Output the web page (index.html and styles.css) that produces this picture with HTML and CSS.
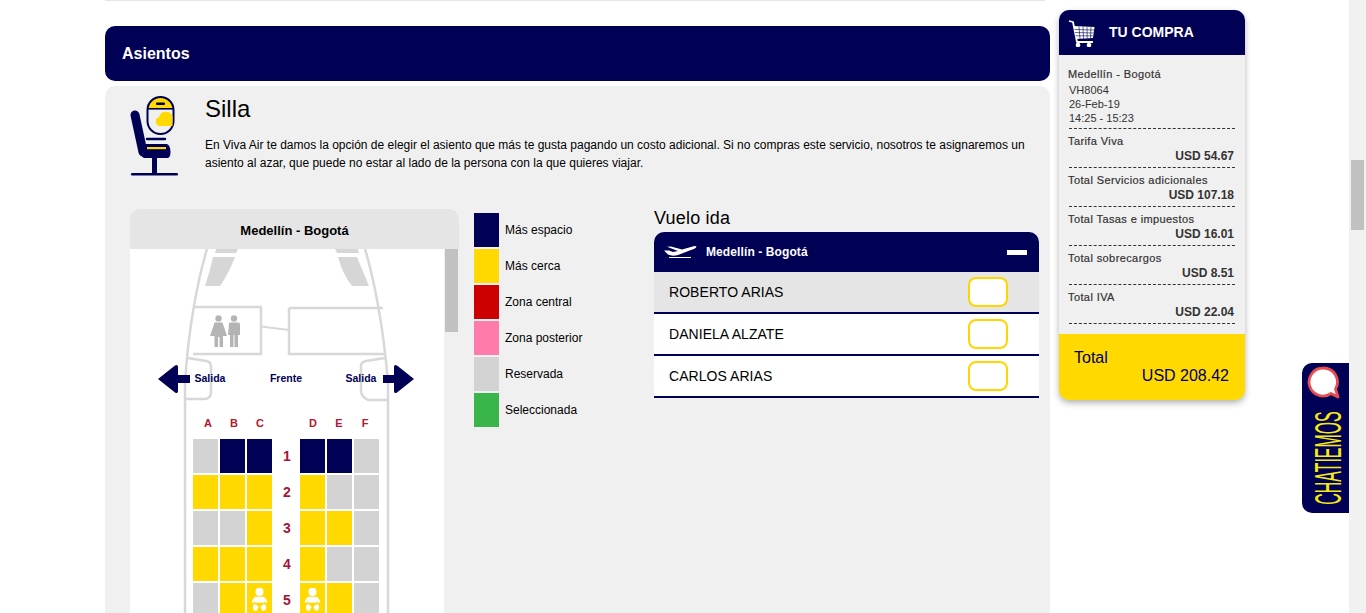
FILE: index.html
```html
<!DOCTYPE html>
<html lang="es">
<head>
    <meta charset="utf-8">
    <title>Asientos</title>
    <link rel="stylesheet" href="styles.css">
</head>
<body>

<div class="page">

    <div class="main">
        <div class="top_line"></div>
        <h2 class="banner">Asientos</h2>

        <div class="panel">
            <div class="intro">
                <svg class="seat_icon" width="48" height="80" viewBox="0 0 48 80">
                    <path d="M18 13V14A12.5 12.5 0 0 1 43 14V13Z" fill="#ffd900"/>
                    <rect x="17.5" y="1" width="26" height="37" rx="13" fill="none" stroke="#000055" stroke-width="2"/>
                    <rect x="18" y="12" width="25" height="1.6" fill="#000055"/>
                    <rect x="26" y="6.5" width="9" height="2.5" rx="1" fill="#000055"/>
                    <path d="M30 30A4.500 4.500 0 0 1 29 21.200A7 7 0 0 1 42.500 20.500V30Z" fill="#ffd900"/>
                    <path d="M5 19L13 56" stroke="#000055" stroke-width="9" stroke-linecap="round"/>
                    <path d="M17 43H35" stroke="#000055" stroke-width="2.4" stroke-linecap="round"/>
                    <path d="M14 48H37Q40.500 50 40.500 56Q40.500 62 37 62H14Q10 60 9 54Z" fill="#000055"/>
                    <rect x="17" y="51" width="19" height="2.200" fill="#ffd900"/>
                    <rect x="22" y="61" width="5" height="17" fill="#000055"/>
                    <rect x="1" y="77" width="47" height="2.4" rx="1.2" fill="#000055"/>
                </svg>
                <div class="intro_text">
                    <h1>Silla</h1>
                    <p>En Viva Air te damos la opción de elegir el asiento que más te gusta pagando un costo adicional. Si no compras este servicio, nosotros te asignaremos un asiento al azar, que puede no estar al lado de la persona con la que quieres viajar.</p>
                </div>
            </div>

            <div class="columns">
                <div class="map_card">
                    <div class="map_title">Medellín - Bogotá</div>
                    <div class="map_body">
                        <div class="map_canvas">
                            <svg class="plane" width="314" height="364" viewBox="0 0 314 364">
                                <g fill="none" stroke="#d8d8d8" stroke-width="2.5">
                                    <path d="M77 0C68 30 58 80 55 135V364"/>
                                    <path d="M235 0C244 30 254 80 258 135V364"/>
                                    <path d="M63 58H131V105H63"/>
                                    <path d="M159 59H253M159 59V105H254"/>
                                    <path d="M131 77.5L159 81" stroke-width="2"/>
                                    <path d="M58 109L76 112Q81 113 81 117V143Q81 150 74 150H56"/>
                                    <path d="M255 109L236 112Q231 113 231 117V143Q232 148 238 151L257 151"/>
                                </g>
                                <g fill="#d6d6d6">
                                    <path d="M86 0H108L106 4H85Z"/>
                                    <path d="M83 8H105Q98 26 90 37H75Q80 22 83 8Z"/>
                                    <path d="M205 0H228L229 4H207Z"/>
                                    <path d="M208 8H227L239 37H222Q213 26 208 8Z"/>
                                </g>
                                <g fill="#b4b4b4">
                                    <circle cx="88.5" cy="69.5" r="3.2"/>
                                    <path d="M84.500 73.500H92.500L97 87H93V98H89.500V88H88V98H84.500V87H80Z"/>
                                    <circle cx="104" cy="69.5" r="3.2"/>
                                    <path d="M99 74.500Q99 73.500 100 73.500H108Q110 73.500 110 75V86H108V98H104.500V86H103.500V98H100V86H98Z"/>
                                </g>
                                <g fill="#000055">
                                    <path d="M28 130L45 116.500Q48 115 48 118V126H60V134H48V142Q48 145 45 143.500Z"/>
                                    <path d="M284 130L267 116.500Q264 115 264 118V126H253V134H264V142Q264 145 267 143.500Z"/>
                                </g>
                                <g class="plane_labels">
                                    <text x="80" y="133">Salida</text>
                                    <text x="156" y="133">Frente</text>
                                    <text x="231" y="133">Salida</text>
                                </g>
                            </svg>
                            <div class="letters">
                                <span>A</span><span>B</span><span>C</span><span></span><span>D</span><span>E</span><span>F</span>
                            </div>
                            <div class="seats">
                                <i class="seat grey"></i><i class="seat navy"></i><i class="seat navy"></i><span class="row_num">1</span><i class="seat navy"></i><i class="seat navy"></i><i class="seat grey"></i>
                                <i class="seat yellow"></i><i class="seat yellow"></i><i class="seat yellow"></i><span class="row_num">2</span><i class="seat yellow"></i><i class="seat grey"></i><i class="seat grey"></i>
                                <i class="seat grey"></i><i class="seat grey"></i><i class="seat yellow"></i><span class="row_num">3</span><i class="seat yellow"></i><i class="seat yellow"></i><i class="seat grey"></i>
                                <i class="seat yellow"></i><i class="seat yellow"></i><i class="seat yellow"></i><span class="row_num">4</span><i class="seat yellow"></i><i class="seat grey"></i><i class="seat grey"></i>

                                <i class="seat grey"></i><i class="seat yellow"></i>
                                <i class="seat yellow"><svg class="baby" width="17" height="25" viewBox="0 0 19 27"><use href="#baby"/></svg></i>
                                <span class="row_num">5</span>
                                <i class="seat yellow"><svg class="baby" width="17" height="25" viewBox="0 0 19 27"><use href="#baby"/></svg></i>
                                <i class="seat yellow"></i><i class="seat grey"></i>
                            </div>
                        </div>
                        <div class="map_scroll"><div class="map_thumb"></div></div>
                    </div>
                </div>

                <ul class="legend">
                    <li><i class="swatch navy"></i>Más espacio</li>
                    <li><i class="swatch yellow"></i>Más cerca</li>
                    <li><i class="swatch red"></i>Zona central</li>
                    <li><i class="swatch pink"></i>Zona posterior</li>
                    <li><i class="swatch grey"></i>Reservada</li>
                    <li><i class="swatch green"></i>Seleccionada</li>
                </ul>

                <div class="flight">
                    <h3>Vuelo ida</h3>
                    <div class="flight_head">
                        <svg width="33" height="14" viewBox="0 0 33 14">
                            <path d="M0 5.500L5 5.500L9 7L14 6L3 1.800L7 1.500L18 4.500L27 2Q32 0.500 32.500 1.500Q32 3.500 27 5L14 10Q8 11.500 4 9.500Z" fill="#fff"/>
                            <path d="M5 12.500H27" stroke="#fff" stroke-width="1"/>
                        </svg>
                        <span class="flight_name">Medellín - Bogotá</span>
                        <i class="minus"></i>
                    </div>
                    <div class="passenger active"><span>ROBERTO ARIAS</span><i class="seat_box"></i></div>
                    <div class="passenger"><span>DANIELA ALZATE</span><i class="seat_box"></i></div>
                    <div class="passenger"><span>CARLOS ARIAS</span><i class="seat_box"></i></div>
                </div>
            </div>
        </div>
    </div>

    <div class="cart">
        <div class="cart_head">
            <svg width="28" height="28" viewBox="0 0 28 28">
                <path d="M1 2L5 3L9 23H25" fill="none" stroke="#fff" stroke-width="1.800" stroke-linejoin="round"/>
                <path d="M5.500 7L26.500 8L25 19L8.500 20Z" fill="#fff"/>
                <path d="M6.500 10.500L26 11M7 13.500L25.600 14M7.500 16.800L25.300 16.800M11 7.500L12 20M15 7.500L15.500 20M19 8L19.200 19.500M23 8L22.500 19" stroke="#000055" stroke-width="0.600"/>
                <circle cx="10" cy="26" r="2.300" fill="#fff"/>
                <circle cx="21" cy="26" r="2.300" fill="#fff"/>
            </svg>
            <span>TU COMPRA</span>
        </div>
        <div class="cart_body">
            <div class="cart_block trip">
                <div class="cart_label">Medellín - Bogotá</div>
                <div>VH8064</div>
                <div>26-Feb-19</div>
                <div>14:25 - 15:23</div>
            </div>
            <div class="cart_block">
                <div class="cart_label">Tarifa Viva</div>
                <div class="cart_price">USD 54.67</div>
            </div>
            <div class="cart_block">
                <div class="cart_label">Total Servicios adicionales</div>
                <div class="cart_price">USD 107.18</div>
            </div>
            <div class="cart_block">
                <div class="cart_label">Total Tasas e impuestos</div>
                <div class="cart_price">USD 16.01</div>
            </div>
            <div class="cart_block">
                <div class="cart_label">Total sobrecargos</div>
                <div class="cart_price">USD 8.51</div>
            </div>
            <div class="cart_block">
                <div class="cart_label">Total IVA</div>
                <div class="cart_price">USD 22.04</div>
            </div>
        </div>
        <div class="cart_total">
            <div>Total</div>
            <div class="cart_total_value">USD 208.42</div>
        </div>
    </div>

</div>

<div class="chat">
    <svg class="chat_bubble" width="34" height="34" viewBox="0 0 34 34">
        <path d="M16 2A14 14 0 1 0 24 27.500L31 31L28.500 23A14 14 0 0 0 16 2Z" fill="#fff" stroke="#ea4c50" stroke-width="2.800" stroke-linejoin="round"/>
    </svg>
    <span class="chat_text">CHATIEMOS</span>
</div>

<div class="page_scroll"><div class="page_thumb"></div></div>

<svg width="0" height="0" class="defs">
    <symbol id="baby" viewBox="0 0 19 27">
        <circle cx="9.500" cy="5" r="4.500" fill="#fff"/>
        <path d="M5 10.500H14Q16 11 18.500 16.500L16 17.500L14.500 15V17H4.500V15L3 17.500L0.500 16.500Q3 11 5 10.500Z" fill="#fff"/>
        <path d="M3.500 18.500Q7 19 8.500 22L6 26.500Q2 26 2 21.500Z" fill="#fff"/>
        <path d="M15.500 18.500Q12 19 10.500 22L13 26.500Q17 26 17 21.500Z" fill="#fff"/>
    </symbol>
</svg>

</body>
</html>
```

FILE: styles.css
```css
* {
    box-sizing: border-box;
}

html, body {
    margin: 0;
    height: 613px;
    overflow: hidden;
    background: #ffffff;
    font-family: "Liberation Sans", Arial, sans-serif;
    color: #000000;
}

.page {
    display: flex;
    align-items: flex-start;
    gap: 9px;
    padding-left: 105px;
}

/* left column */

.main {
    width: 945px;
}

.top_line {
    height: 1px;
    margin-right: 5px;
    background: #e6e6e6;
}

.banner {
    margin: 25px 0 5px 0;
    height: 55px;
    padding-left: 17px;
    border-radius: 10px;
    background: #000055;
    color: #ffffff;
    font-size: 16px;
    font-weight: bold;
    line-height: 55px;
}

.panel {
    height: 540px;
    padding: 10px 11px 0 25px;
    border-radius: 10px;
    background: #f0f0f0;
}

.intro {
    display: flex;
    height: 113px;
}

.seat_icon {
    flex: none;
    margin-right: 27px;
}

.intro_text {
    padding-top: 1px;
}

.intro_text h1 {
    margin: 0;
    font-size: 24px;
    font-weight: normal;
    line-height: 24px;
}

.intro_text p {
    margin: 15px 0 0 0;
    font-size: 12px;
    line-height: 18px;
}

.columns {
    display: flex;
    align-items: flex-start;
}

/* seat map */

.map_card {
    flex: none;
    width: 329px;
}

.map_title {
    height: 40px;
    border-radius: 10px 10px 0 0;
    background: #e5e5e5;
    font-size: 13px;
    font-weight: bold;
    line-height: 43px;
    text-align: center;
}

.map_body {
    display: flex;
    height: 364px;
}

.map_canvas {
    position: relative;
    width: 314px;
    overflow: hidden;
    background: #ffffff;
    padding-top: 154px;
}

.plane {
    position: absolute;
    left: 0;
    top: 0;
}

.plane_labels {
    fill: #000055;
    font-size: 10.5px;
    font-weight: bold;
    text-anchor: middle;
}

.letters {
    position: relative;
    display: grid;
    grid-template-columns: 26px 26px 26px 27px 26px 26px 26px;
    height: 36px;
    padding-left: 65px;
    color: #b5182f;
    font-size: 11px;
    font-weight: bold;
    line-height: 41px;
    text-align: center;
}

.seats {
    position: relative;
    display: grid;
    grid-template-columns: 25px 25px 25px 24px 25px 25px 25px;
    grid-auto-rows: 34px;
    gap: 2px;
    padding-left: 63px;
}

.seat {
    display: block;
    height: 34px;
}

.row_num {
    padding-left: 2px;
    color: #a5153a;
    font-size: 14px;
    font-weight: bold;
    line-height: 34px;
    text-align: center;
}

.baby {
    display: block;
    margin: 4px auto 0 auto;
}

.navy {
    background: #000055;
}

.yellow {
    background: #ffd900;
}

.grey {
    background: #d3d3d3;
}

.red {
    background: #cc0000;
}

.pink {
    background: #ff7bac;
}

.green {
    background: #39b54a;
}

.map_scroll {
    width: 15px;
    padding-left: 1px;
}

.map_thumb {
    width: 13px;
    height: 83px;
    background: #c1c1c1;
}

.defs {
    position: absolute;
}

/* legend */

.legend {
    flex: none;
    width: 180px;
    margin: 4px 0 0 15px;
    padding: 0;
    list-style: none;
    font-size: 12px;
}

.legend li {
    display: flex;
    align-items: center;
    gap: 6px;
    height: 34px;
    margin-bottom: 2px;
}

.swatch {
    width: 25px;
    height: 34px;
}

/* passengers */

.flight {
    flex: none;
    width: 385px;
}

.flight h3 {
    margin: 0;
    padding-bottom: 4px;
    font-size: 18px;
    font-weight: normal;
    letter-spacing: 0.2px;
    line-height: 19px;
}

.flight_head {
    display: flex;
    align-items: center;
    height: 40px;
    padding: 0 12px 0 10px;
    border-radius: 10px 10px 0 0;
    background: #000055;
    color: #ffffff;
    font-size: 12px;
    font-weight: bold;
    letter-spacing: 0.1px;
}

.flight_name {
    flex: 1;
    margin-left: 9px;
}

.minus {
    width: 20px;
    height: 5px;
    background: #ffffff;
}

.passenger {
    display: flex;
    align-items: center;
    justify-content: space-between;
    height: 42px;
    padding: 0 31px 0 15px;
    border-bottom: 2px solid #000055;
    background: #ffffff;
    font-size: 14px;
    letter-spacing: 0.05px;
}

.passenger.active {
    background: #e5e5e5;
}

.seat_box {
    width: 40px;
    height: 30px;
    border: 2px solid #ffd500;
    border-radius: 8px;
    background: #ffffff;
}

/* cart */

.cart {
    width: 186px;
    margin-top: 10px;
    border-radius: 10px;
    background: #f0f0f0;
    box-shadow: 0 3px 6px rgba(0, 0, 0, 0.3);
}

.cart_head {
    display: flex;
    align-items: center;
    gap: 13px;
    height: 45px;
    padding: 0 0 0 9px;
    border-radius: 10px 10px 0 0;
    background: #000055;
    color: #ffffff;
    font-size: 14px;
    font-weight: bold;
}

.cart_head span {
    margin-bottom: 2px;
}

.cart_body {
    height: 279px;
    padding: 12px 10px 0 10px;
}

.cart_block {
    height: 39px;
    padding-top: 5px;
    border-bottom: 1px dashed #333333;
    color: #333333;
    font-size: 11px;
    line-height: 15px;
}

.cart_block.trip {
    height: 62px;
    padding-top: 0;
    line-height: 14px;
}

.trip .cart_label {
    margin-bottom: 2px;
}

.cart_label {
    margin-left: -1px;
    font-weight: 500;
    letter-spacing: 0.4px;
    -webkit-text-stroke: 0.2px #333333;
}

.cart_price {
    padding-right: 1px;
    font-size: 12px;
    font-weight: bold;
    text-align: right;
}

.cart_total {
    height: 66px;
    padding: 15px 16px 0 15px;
    border-radius: 0 0 10px 10px;
    background: #ffd900;
    color: #000055;
    font-size: 16px;
    line-height: 18px;
}

.cart_total_value {
    text-align: right;
}

/* chat tab and page scrollbar */

.chat {
    position: absolute;
    left: 1302px;
    top: 363px;
    width: 47px;
    height: 150px;
    border-radius: 10px 0 0 10px;
    background: #000055;
}

.chat_bubble {
    position: absolute;
    left: 5px;
    top: 3px;
}

.chat_text {
    position: absolute;
    left: 26px;
    top: 95px;
    color: #f5ea14;
    font-size: 37px;
    line-height: 37px;
    white-space: nowrap;
    transform: translate(-50%, -50%) rotate(-90deg) scaleX(0.43);
}

.page_scroll {
    position: absolute;
    right: 0;
    top: 0;
    width: 17px;
    height: 613px;
    background: #f1f1f1;
}

.page_thumb {
    width: 13px;
    height: 70px;
    margin: 160px 0 0 2px;
    background: #c1c1c1;
}
```
